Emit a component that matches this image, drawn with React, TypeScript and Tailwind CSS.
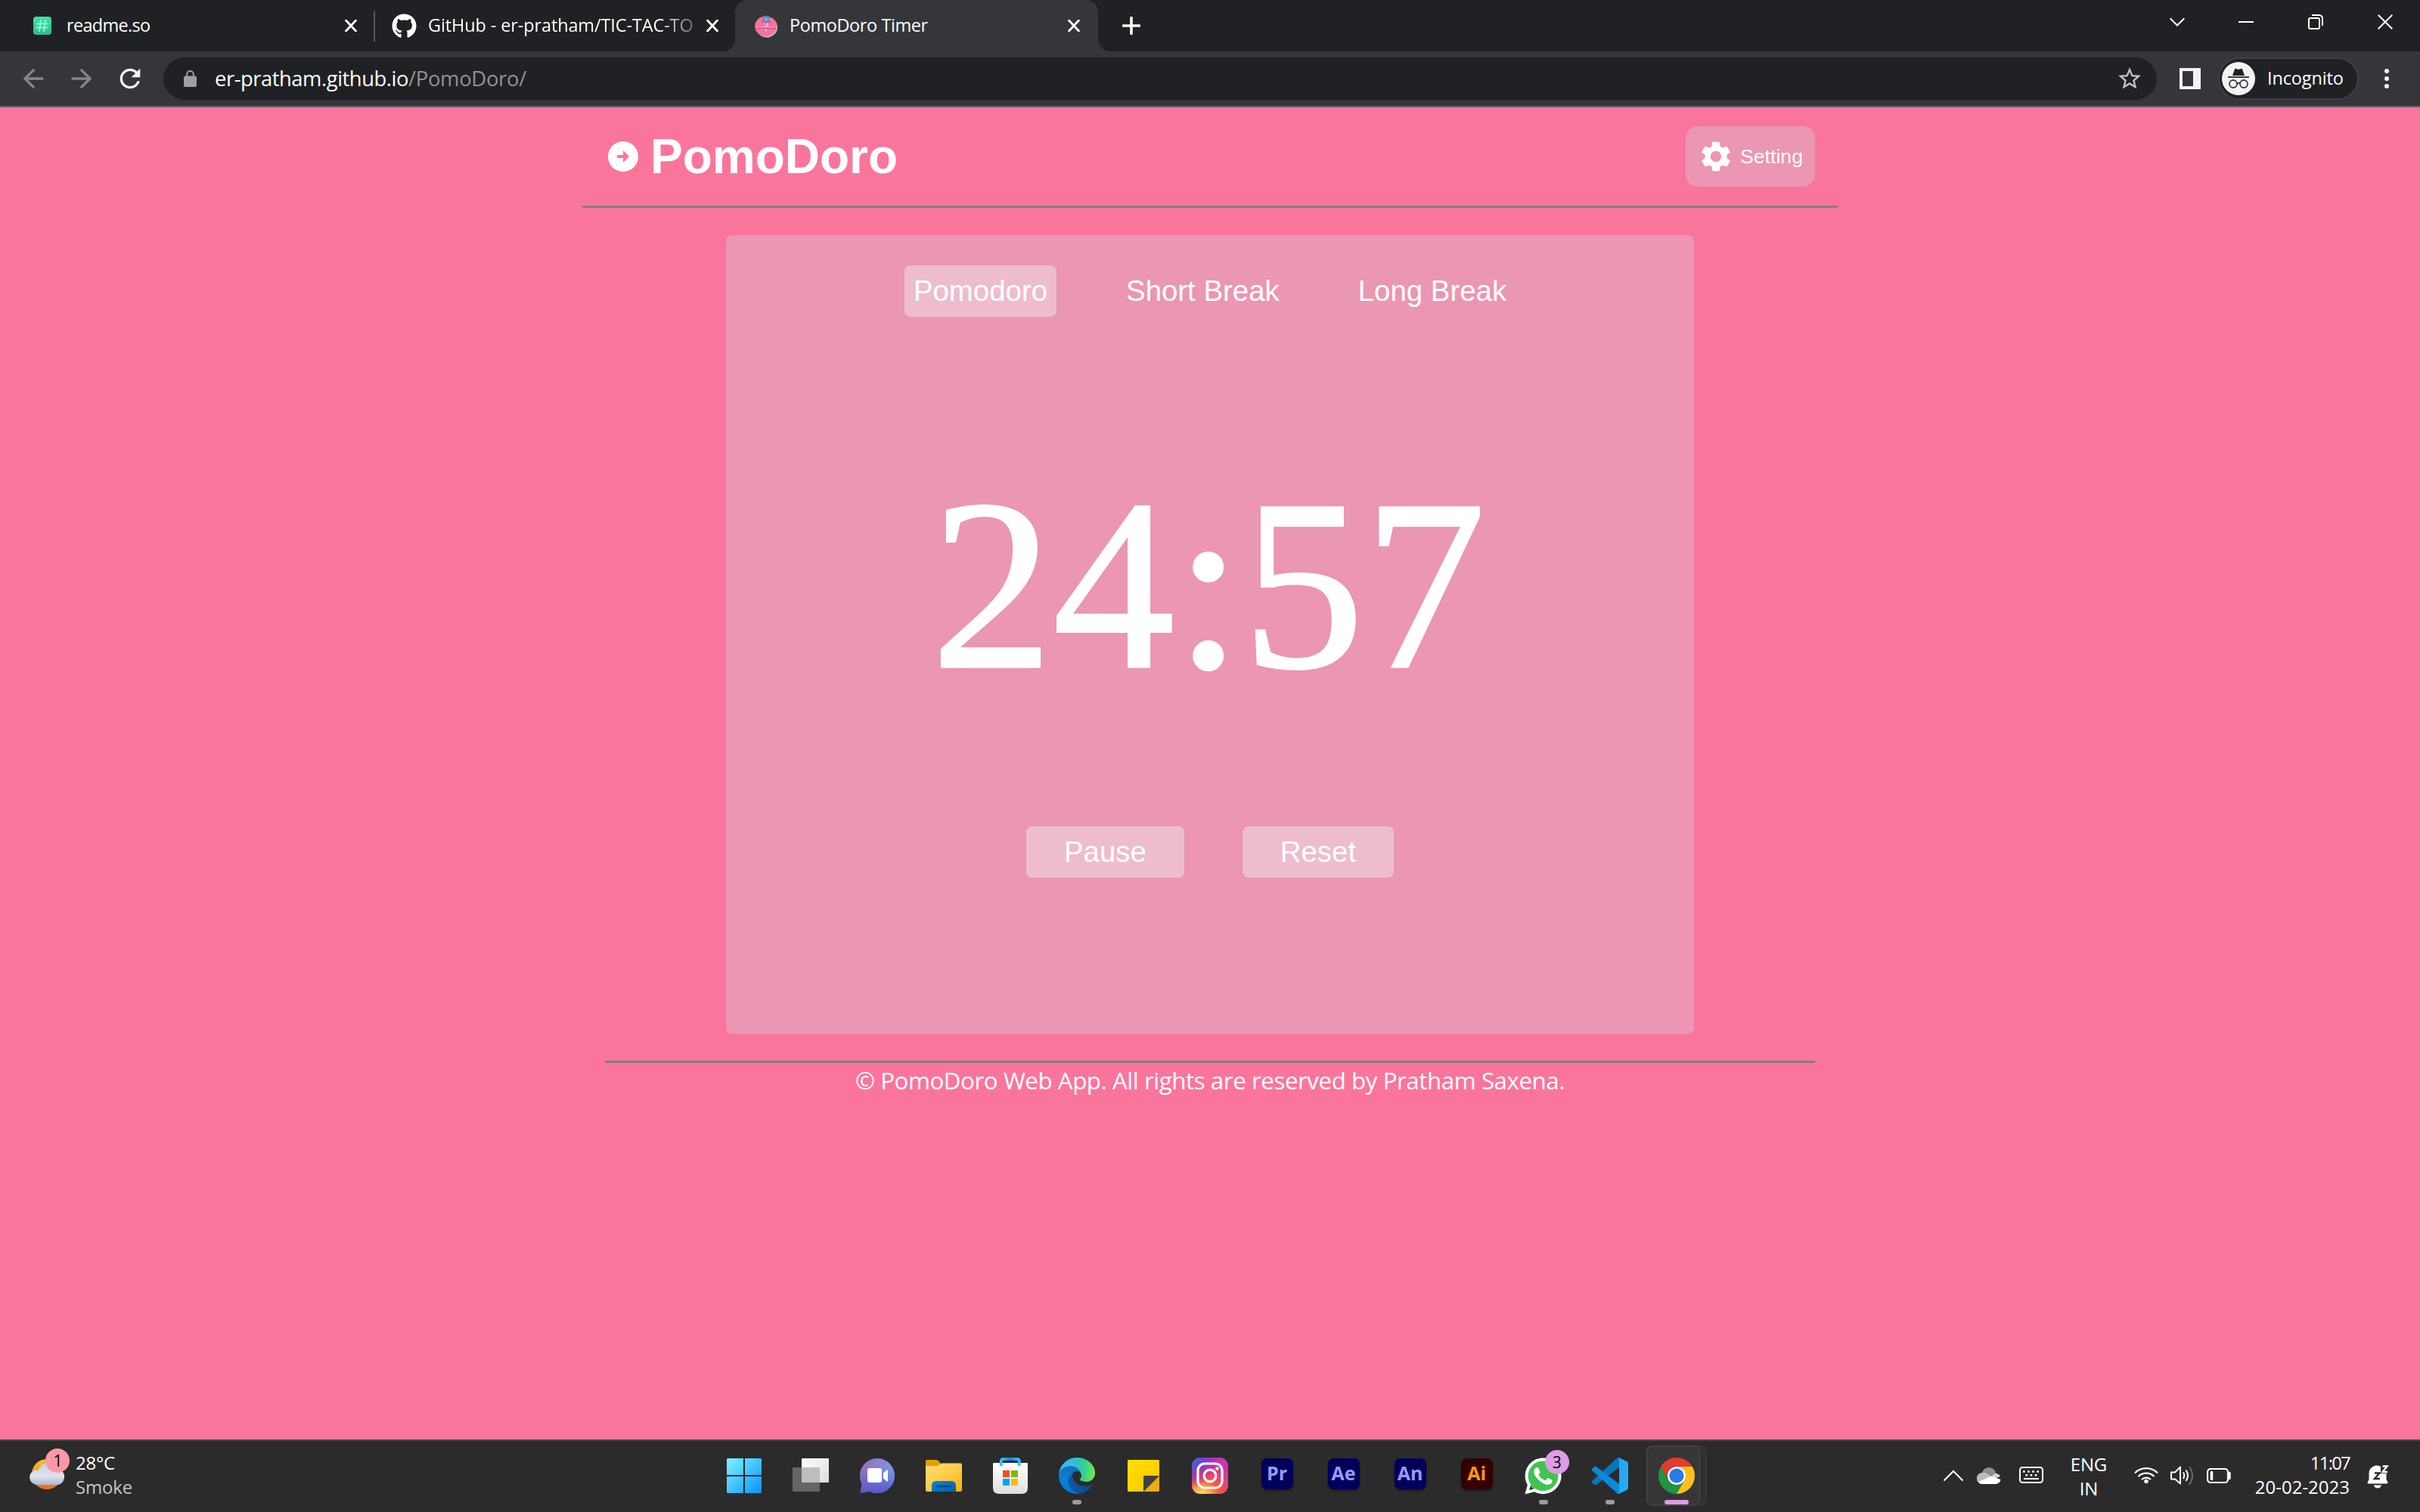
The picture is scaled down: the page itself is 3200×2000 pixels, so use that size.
import React from "react";
import { FaGithub, FaWhatsapp } from "react-icons/fa";
import { MdSettings, MdStarBorder, MdRefresh, MdArrowBack, MdArrowForward } from "react-icons/md";

const CloseX = () => (
  <svg width="16" height="16" viewBox="0 0 16 16" className="shrink-0">
    <path d="M1.500 1 14.500 15M14.500 1 1.500 15" stroke="#fff" strokeWidth="2.800" strokeLinecap="round" fill="none" />
  </svg>
);

function TabStrip() {
  return (
    <div className="flex h-[68px] bg-[#202124]">
      <div className="flex w-[494px] items-center pl-[44px]">
        <svg width="24" height="24" viewBox="0 0 24 24" className="shrink-0">
          <defs>
            <linearGradient id="rd" x1="0" y1="0" x2="0" y2="1">
              <stop offset="0" stopColor="#3fe0a8" />
              <stop offset="1" stopColor="#35b98d" />
            </linearGradient>
          </defs>
          <rect width="24" height="24" rx="4" fill="url(#rd)" />
          <path d="M10 5 8 19M16 5l-2 14M5 9.500h14M4.500 14.500h14" stroke="#86f7cf" strokeWidth="2.200" strokeLinecap="round" />
        </svg>
        <span className="relative -top-px ml-[20px] w-[368px] whitespace-nowrap text-[23.5px] leading-8 tracking-[-0.7px] text-white">readme.so</span>
        <CloseX />
      </div>
      <div className="mt-[15px] h-10 w-[2px] bg-[#5a5c60]" />
      <div className="flex w-[476px] items-center pl-[22px]">
        <FaGithub className="h-[33px] w-[33px] shrink-0 text-white" />
        <span className="relative -top-px ml-[15px] w-[354px] whitespace-nowrap text-[23.5px] leading-8 tracking-[-0.12px] text-white [mask-image:linear-gradient(to_right,#000_86%,#0004_100%)]">GitHub - er-pratham/TIC-TAC-TO</span>
        <span className="ml-[14px] flex"><CloseX /></span>
      </div>
      <div className="relative flex w-[480px] items-center rounded-t-[16px] bg-[#35363a] pl-[26px]">
        <svg width="16" height="16" viewBox="0 0 16 16" className="absolute bottom-0 -left-4"><path d="M16 0V16H0A16 16 0 0 0 16 0Z" fill="#35363a" /></svg>
        <svg width="16" height="16" viewBox="0 0 16 16" className="absolute -right-4 bottom-0"><path d="M0 0V16H16A16 16 0 0 1 0 0Z" fill="#35363a" /></svg>
        <svg width="32" height="32" viewBox="0 0 32 32" className="shrink-0">
          <ellipse cx="16" cy="18" rx="14" ry="13.500" fill="#cfc6d6" />
          <ellipse cx="14.700" cy="16.800" rx="14.500" ry="13.500" fill="#f9719b" />
          <path d="M1 19.500H28" stroke="#b3567f" strokeWidth="1" />
          <path d="M1.500 18H28" stroke="#ffd9e5" strokeWidth="1" strokeDasharray="1 1.200" />
          <path d="M12.500 13.500h1.700v3h-1.700M15.500 13.500h1.700v3h-1.700" stroke="#fff" strokeWidth=".7" fill="none" />
          <circle cx="15" cy="22" r="1" fill="#fff" />
          <path d="M15 1.500 16.200 5.500 21 4.500 17.800 7.500 20.500 11.500 16.500 9.500 15 13 13.500 9.500 9.500 11.500 12.200 7.500 9 4.500 13.800 5.500Z" fill="#5ab4ee" stroke="#2f4d86" strokeWidth=".5" />
        </svg>
        <span className="relative -top-px ml-[14px] w-[368px] whitespace-nowrap text-[23.5px] leading-8 tracking-[-0.42px] text-white">PomoDoro Timer</span>
        <CloseX />
      </div>
      <svg width="24" height="24" viewBox="0 0 24 24" className="mt-[22px] ml-[32px] shrink-0"><path d="M12 1.500V22.500M1.500 12H22.500" stroke="#fff" strokeWidth="3.600" strokeLinecap="round" /></svg>
      <div className="ml-auto flex pr-[36px]">
        <svg width="20" height="12" viewBox="0 0 20 12" className="mt-[23px]"><path d="M.7 1.200 10 10.500 19.300 1.200" stroke="#fff" strokeWidth="2" fill="none" /></svg>
        <svg width="20" height="2" viewBox="0 0 20 2" className="mt-[28px] ml-[71px]"><path d="M0 1H20" stroke="#fff" strokeWidth="2" /></svg>
        <svg width="20" height="20" viewBox="0 0 20 20" className="mt-[19px] ml-[72px]" fill="none" stroke="#fff" strokeWidth="2">
          <rect x="1" y="5" width="14" height="14" rx="2" />
          <path d="M5 1H14.500A4.500 4.500 0 0 1 19 5.500V15" />
        </svg>
        <svg width="20" height="20" viewBox="0 0 20 20" className="mt-[19px] ml-[72px]"><path d="M.7.700 19.300 19.300M19.300.700.700 19.300" stroke="#fff" strokeWidth="2" /></svg>
      </div>
    </div>
  );
}

function Toolbar() {
  return (
    <div className="flex h-[74px] items-center border-b-2 border-[#5f6064] bg-[#35363a] pl-[24px] text-[#e8eaed]">
      <MdArrowBack className="h-10 w-10 text-[#85868a]" />
      <MdArrowForward className="ml-6 h-10 w-10 text-[#85868a]" />
      <MdRefresh className="ml-6 h-10 w-10 text-[#f1f3f4]" />
      <div className="ml-[24px] flex h-14 w-[2636px] items-center rounded-full bg-[#202124] pl-[27px]">
        <svg width="17" height="22" viewBox="0 0 17 22">
          <path d="M4.200 8V5.200A4.300 4.300 0 0 1 12.800 5.200V8" stroke="#9aa0a6" strokeWidth="2" fill="none" />
          <rect y="7.500" width="17" height="14.500" rx="2" fill="#9aa0a6" />
        </svg>
        <span className="ml-[24px] whitespace-nowrap text-[27.4px] leading-9 text-white"><span className="tracking-[-0.47px]">er-pratham.github.io</span><span className="tracking-[-0.3px] text-[#8f9296]">/PomoDoro/</span></span>
        <MdStarBorder className="mr-[18px] ml-auto h-9 w-9 text-[#bdc1c6]" />
      </div>
      <div className="ml-[30px] h-7 w-7 border-4 border-r-10 border-[#f1f3f4]" />
      <div className="ml-[23px] flex h-14 w-[186px] items-center rounded-full border-2 border-[#3f4044] bg-[#202124] pl-[3px]">
        <svg width="44" height="44" viewBox="0 0 44 44" className="shrink-0">
          <circle cx="22" cy="22" r="22" fill="#f1f3f4" />
          <path d="M17 9.500Q17.500 8.300 19 9L22 10 25 9Q26.500 8.300 27 9.500L30 18H14Z" fill="#202124" />
          <path d="M8 20H36" stroke="#3b3c40" strokeWidth="2" />
          <g fill="none" stroke="#3b3c40" strokeWidth="1.800"><circle cx="15" cy="29" r="5" /><circle cx="29" cy="29" r="5" /><path d="M20 28.500Q22 27 24 28.500" /></g>
        </svg>
        <span className="relative -top-px ml-[16px] text-[23.5px] leading-8 tracking-[-0.15px] text-white">Incognito</span>
      </div>
      <svg width="6" height="28" viewBox="0 0 6 28" className="ml-[34px]" fill="#f1f3f4"><circle cx="3" cy="4" r="3" /><circle cx="3" cy="14" r="3" /><circle cx="3" cy="24" r="3" /></svg>
    </div>
  );
}

function PomodoroPage() {
  return (
    <div className="flex h-[1762px] flex-col items-center bg-[#fa759c] font-['Liberation_Sans',Arial,sans-serif] text-white">
      <header className="flex h-[133px] w-[1660px] items-center border-b-3 border-[#808080] px-[30px]">
        <svg width="48" height="48" viewBox="0 0 24 24" fill="#fff">
          <path d="M22 12c0-5.520-4.480-10-10-10S2 6.480 2 12s4.480 10 10 10 10-4.480 10-10zm-10 4v-3H8v-2h4V8l4 4-4 4z" />
        </svg>
        <h1 className="ml-[12px] text-[64px] leading-[72px] font-bold">PomoDoro</h1>
        <button className="ml-auto flex h-20 w-[171px] items-center rounded-2xl bg-[#eb96b2] pl-[16px]">
          <MdSettings className="h-12 w-12" />
          <span className="ml-[8px] text-[26.67px] leading-8">Setting</span>
        </button>
      </header>
      <main className="mt-9 h-[1057px] w-[1280px] rounded-lg bg-[#eb96b2] pt-10 text-[38.4px] leading-[44px]">
        <nav className="flex justify-center gap-20">
          <button className="rounded-lg bg-[#edbdce] p-3">Pomodoro</button>
          <button className="p-3">Short Break</button>
          <button className="p-3">Long Break</button>
        </nav>
        <div className="flex h-[674px] items-center justify-center pt-[36px] pr-[4px] font-['Liberation_Serif','Times_New_Roman',serif] text-[322px] leading-none [-webkit-text-stroke:3px_white]">24:57</div>
        <div className="flex justify-center gap-[77px]">
          <button className="rounded-lg bg-[#edbdce] px-[50px] py-3">Pause</button>
          <button className="rounded-lg bg-[#edbdce] px-[50px] py-3">Reset</button>
        </div>
      </main>
      <footer className="mt-[35px] w-[1600px] border-t-3 border-[#808080] text-center font-['Open_Sans','Noto_Sans',sans-serif] text-[31.3px] leading-[46px] tracking-[-0.45px]">© PomoDoro Web App. All rights are reserved by Pratham Saxena.</footer>
    </div>
  );
}

const Adobe = ({ t, bg, fg }: { t: string; bg: string; fg: string }) => (
  <span className={`mb-[5px] flex h-[41px] w-[42px] items-center justify-center rounded-[8px] pb-[3px] text-[25px] leading-none font-bold shadow-[0_2px_3px_#0006] ${bg} ${fg}`}>{t}</span>
);

const icons: { icon: React.ReactNode; dot?: boolean }[] = [
  { icon: (
    <svg width="46" height="46" viewBox="0 0 46 46">
      <defs><linearGradient id="win" x1="0" y1="0" x2="46" y2="46" gradientUnits="userSpaceOnUse"><stop offset="0" stopColor="#7df4ff" /><stop offset="1" stopColor="#0794ff" /></linearGradient></defs>
      <path d="M1 0H22V22H0V1ZM24 0H45L46 1V22H24ZM0 24H22V46H1L0 45ZM24 24H46V45L45 46H24Z" fill="url(#win)" />
    </svg>) },
  { icon: (
    <svg width="48" height="46" viewBox="0 0 48 46">
      <defs><linearGradient id="tv" x1="0" y1="0" x2="1" y2="1"><stop offset="0" stopColor="#fff" /><stop offset="1" stopColor="#dcdcdc" /></linearGradient></defs>
      <rect x="12" y="0" width="36" height="32" rx="1" fill="url(#tv)" />
      <rect x="0" y="12" width="36" height="32" rx="1" fill="#7a7a7a" fillOpacity=".75" />
      <path d="M12 12H36V32H12Z" fill="#bdbdbd" />
    </svg>) },
  { icon: (
    <svg width="46" height="46" viewBox="0 0 46 46">
      <defs><linearGradient id="ch" x1="0" y1="0" x2="1" y2=".35"><stop offset="0" stopColor="#9a68ad" /><stop offset="1" stopColor="#7a9bee" /></linearGradient>
        <linearGradient id="ch2" x1="0" y1="0" x2="0" y2="1"><stop offset=".3" stopColor="#5558c8" stopOpacity="0" /><stop offset="1" stopColor="#5558cc" /></linearGradient></defs>
      <path d="M23 0A23 23 0 1 1 13 43.700L2 45.500Q.5 45.500.800 44L2.500 33.500A23 23 0 0 1 23 0Z" fill="url(#ch)" />
      <path d="M23 0A23 23 0 1 1 13 43.700L2 45.500Q.5 45.500.800 44L2.500 33.500A23 23 0 0 1 23 0Z" fill="url(#ch2)" />
      <rect x="10" y="13" width="19" height="19" rx="3" fill="#fff" /><path d="M31 19.500 35.500 15.500Q37 15 37 16.500V29.500Q37 31 35.500 30.300L31 26.500Z" fill="#fff" />
    </svg>) },
  { icon: (
    <svg width="48" height="42" viewBox="0 0 48 42">
      <defs><linearGradient id="fo" x1="0" y1="0" x2="1" y2="1"><stop offset="0" stopColor="#ffdc78" /><stop offset=".6" stopColor="#ffca3e" /><stop offset="1" stopColor="#f5ae05" /></linearGradient>
        <linearGradient id="fb" x1="0" y1="0" x2="1" y2="1"><stop offset="0" stopColor="#0f83d9" /><stop offset="1" stopColor="#0a5cab" /></linearGradient></defs>
      <path d="M0 2Q0 0 2 0H14Q16 0 17.500 2L20 5V12H0Z" fill="#e0a000" />
      <path d="M0 8 L14 8Q16 8 18 6.500L20 5Q21 4.500 22 4.500H46Q48 4.500 48 6.500V40Q48 42 46 42H2Q0 42 0 40Z" fill="url(#fo)" />
      <path d="M8 42V34Q8 28 14 28H34Q40 28 40 34V42Z" fill="url(#fb)" /><path d="M15 35H33" stroke="#064889" strokeWidth="2.400" strokeLinecap="round" />
    </svg>) },
  { icon: (
    <svg width="46" height="48" viewBox="0 0 46 48">
      <defs><linearGradient id="st" x1="0" y1="0" x2="0" y2="1"><stop offset="0" stopColor="#fff" /><stop offset="1" stopColor="#dedede" /></linearGradient>
        <linearGradient id="sh" x1="0" y1="0" x2="1" y2="0"><stop offset="0" stopColor="#32c5f4" /><stop offset=".5" stopColor="#1384dc" /><stop offset="1" stopColor="#32c5f4" /></linearGradient></defs>
      <path d="M0 8Q0 7 1 7H45Q46 7 46 8V40Q46 48 38 48H8Q0 48 0 40Z" fill="url(#st)" />
      <path d="M10.800 11V5Q10.800 2 14 2H31.500Q34.800 2 34.800 5V11" fill="none" stroke="url(#sh)" strokeWidth="3.800" />
      <path d="M13 17H22V26H13Z" fill="#f25022" /><path d="M24 17H33V26H24Z" fill="#7fba00" /><path d="M13 28H22V37H13Z" fill="#00a4ef" /><path d="M24 28H33V37H24Z" fill="#ffb900" />
    </svg>) },
  { dot: true, icon: (
    <svg width="48" height="48" viewBox="0 0 256 256">
      <defs>
        <linearGradient id="e1" x1="60" y1="178" x2="237" y2="178" gradientUnits="userSpaceOnUse"><stop offset="0" stopColor="#0c59a4" /><stop offset="1" stopColor="#114a8b" /></linearGradient>
        <linearGradient id="e2" x1="150" y1="80" x2="45" y2="230" gradientUnits="userSpaceOnUse"><stop offset="0" stopColor="#1b70b8" /><stop offset=".3" stopColor="#0f74c4" /><stop offset=".7" stopColor="#0680d7" /><stop offset="1" stopColor="#0078d4" /></linearGradient>
        <linearGradient id="e3" x1="10" y1="80" x2="250" y2="110" gradientUnits="userSpaceOnUse"><stop offset="0" stopColor="#35c1f1" /><stop offset=".4" stopColor="#30bfd8" /><stop offset=".7" stopColor="#36d08f" /><stop offset="1" stopColor="#6ee94e" /></linearGradient>
      </defs>
      <path fill="url(#e1)" d="M231 190.500c-3.400 1.800-6.900 3.400-10.500 4.700a101.500 101.500 0 0 1-35.800 6.400c-47.200 0-88.300-32.500-88.300-74.100.1-11.400 6.400-21.900 16.400-27.300-42.700 1.800-53.700 46.300-53.700 72.400 0 73.800 68.100 81.300 82.700 81.300 7.900 0 19.800-2.300 26.900-4.600l1.300-.4a128.300 128.300 0 0 0 66.600-52.800 4 4 0 0 0-5.600-5.600z" />
      <path fill="url(#e2)" d="M105.700 241.400a79.200 79.200 0 0 1-22.700-21.300A80.700 80.700 0 0 1 112.500 100.200c3.200-1.500 8.500-4.100 15.600-4a32.400 32.400 0 0 1 25.700 13 31.900 31.900 0 0 1 6.300 18.700c0-.2 24.500-79.600-80-79.600-43.900 0-80 41.700-80 78.200-.2 19.300 4 38.500 12.100 56a128 128 0 0 0 156.400 67.100 75.500 75.500 0 0 1-62.800-8.100z" />
      <path fill="url(#e3)" d="M152.300 148.900c-.8 1-3.300 2.500-3.300 5.700 0 2.600 1.700 5.200 4.800 7.300 14.400 10.100 41.700 8.700 41.800 8.700a59.600 59.600 0 0 0 30.300-8.300 61.400 61.400 0 0 0 30.400-52.900c.3-22.400-8-37.300-11.300-43.900C223.800 23.900 177.700 0 127.700 0A128 128 0 0 0 0 126.200c.5-36.500 36.800-66 80-66 3.500 0 23.500.3 42 10.100 16.300 8.600 24.900 18.900 30.800 29.200 6.200 10.700 7.300 24.100 7.300 29.500 0 5.300-2.700 13.300-7.800 19.900z" />
    </svg>) },
  { icon: (
    <svg width="42" height="42" viewBox="0 0 42 42">
      <defs><linearGradient id="sn" x1="0" y1="0" x2="1" y2="1"><stop offset="0" stopColor="#ffe000" /><stop offset="1" stopColor="#ffc600" /></linearGradient></defs>
      <path d="M1 0H41L42 1V21L21 42H1L0 41V1Z" fill="url(#sn)" /><path d="M42 21V41L41 42H21Z" fill="#f0ac10" /><path d="M21 42V22L22 21H42Z" fill="#404040" />
    </svg>) },
  { icon: (
    <svg width="48" height="48" viewBox="0 0 48 48">
      <defs>
        <radialGradient id="i1" cx=".27" cy="1.080" r="1"><stop offset="0" stopColor="#fd5" /><stop offset=".1" stopColor="#fd5" /><stop offset=".5" stopColor="#ff543e" /><stop offset="1" stopColor="#c837ab" /></radialGradient>
        <radialGradient id="i2" cx="-.17" cy="-.07" r=".95"><stop offset="0" stopColor="#3771c8" /><stop offset=".3" stopColor="#4168d0" /><stop offset="1" stopColor="#60f" stopOpacity="0" /></radialGradient>
      </defs>
      <rect width="48" height="48" rx="11" fill="url(#i1)" /><rect width="48" height="48" rx="11" fill="url(#i2)" />
      <g fill="none" stroke="#fff" strokeWidth="3.200"><rect x="8" y="8" width="32" height="32" rx="9" /><circle cx="24" cy="24" r="7.800" /></g><circle cx="33.500" cy="14.500" r="2.200" fill="#fff" />
    </svg>) },
  { icon: <Adobe t="Pr" bg="bg-[#00005b]" fg="text-[#9999ff]" /> },
  { icon: <Adobe t="Ae" bg="bg-[#00005b]" fg="text-[#9999ff]" /> },
  { icon: <Adobe t="An" bg="bg-[#00005b]" fg="text-[#9999ff]" /> },
  { icon: <Adobe t="Ai" bg="bg-[#330000]" fg="text-[#ff9a00]" /> },
  { dot: true, icon: (
    <span className="relative flex h-12 w-12 items-center justify-center">
      <span className="absolute h-[43px] w-[43px] rounded-full bg-[#41c351]" />
      <FaWhatsapp className="relative h-[55px] w-[55px] shrink-0 text-white" />
      <span className="absolute -top-[10px] left-[26px] flex h-8 w-8 items-center justify-center rounded-full bg-[#dc9de4] text-[21px] leading-none text-black">3</span>
    </span>) },
  { dot: true, icon: (
    <svg width="48" height="48" viewBox="0 0 100 100">
      <path fill="#0a74bc" d="M96.460 10.800 75.860.880a6.230 6.230 0 0 0-7.110 1.200L1.300 63.580a4.170 4.170 0 0 0 0 6.160l5.510 5.010a4.170 4.170 0 0 0 5.320.240l81.230-61.620c2.720-2.070 6.640-.130 6.640 3.290v-.240a6.250 6.250 0 0 0-3.540-5.620z" />
      <path fill="#0a8ad8" d="M96.460 89.200 75.860 99.120a6.230 6.230 0 0 1-7.110-1.200L1.300 36.420a4.170 4.170 0 0 1 0-6.160l5.510-5.010a4.170 4.170 0 0 1 5.320-.240l81.230 61.620c2.720 2.070 6.640.130 6.640-3.290v.240a6.250 6.250 0 0 1-3.540 5.620z" />
      <path fill="#27a8f5" d="M75.860 99.130a6.230 6.230 0 0 1-7.110-1.210c2.310 2.310 6.250.670 6.250-2.590V4.670c0-3.260-3.940-4.900-6.250-2.590a6.230 6.230 0 0 1 7.110-1.210l20.600 9.910A6.250 6.250 0 0 1 100 16.410v67.180a6.250 6.250 0 0 1-3.540 5.630z" />
    </svg>) },
];

const ChromeLogo = () => (
  <svg width="48" height="48" viewBox="0 0 48 48">
    <path fill="#e33b2e" d="M24 12H44.780A24 24 0 0 0 3.220 12L13.600 30A12 12 0 0 1 24 12Z" />
    <path fill="#229342" d="M3.220 12 13.600 30A12 12 0 0 0 34.400 30L24 48A24 24 0 0 1 3.220 12Z" />
    <path fill="#fcc21b" d="M44.780 12H24A12 12 0 0 1 34.400 30L24 48A24 24 0 0 0 44.780 12Z" />
    <circle cx="24" cy="24" r="12" fill="#fff" /><circle cx="24" cy="24" r="9.600" fill="#2a78ea" />
  </svg>
);

function Taskbar() {
  return (
    <div className="flex h-24 border-t-2 border-[#4a4a4a] bg-[#2b2b2b] text-[24px] text-white">
      <div className="flex w-[940px] pl-[36px]">
        <svg width="60" height="60" viewBox="0 0 60 60" className="mt-[8px]">
          <defs>
            <linearGradient id="sun" x1="0" y1="0" x2="0" y2="1"><stop offset="0" stopColor="#f8c22f" /><stop offset="1" stopColor="#f06a0c" /></linearGradient>
            <linearGradient id="cl" x1="0" y1="0" x2="0" y2="1"><stop offset="0" stopColor="#c3cfe0" /><stop offset=".6" stopColor="#dfe4ea" /><stop offset="1" stopColor="#a9b9d6" /></linearGradient>
          </defs>
          <circle cx="26" cy="36" r="20" fill="url(#sun)" />
          <path d="M12 50A10 10 0 0 1 9 31Q13 30 14.500 31A14 14 0 0 1 40 28.500 11 11 0 0 1 41 50Z" fill="url(#cl)" />
          <circle cx="40" cy="18" r="16" fill="#ff99a4" />
          <text x="40.500" y="25.500" textAnchor="middle" fontSize="21" fill="#000">1</text>
        </svg>
        <div className="mt-[13px] ml-[4px] leading-[32px] tracking-[-0.2px]"><div>28°C</div><div className="text-[#c6c6c6]">Smoke</div></div>
      </div>
      <div className="flex">
        {icons.map((it, i) => (
          <div key={i} className="flex w-[88.070px] flex-col items-center">
            <div className="mt-[22px] flex h-12 items-center">{it.icon}</div>
            {it.dot && <span className="mt-2 h-[6px] w-3 rounded-full bg-[#9d9d9d]" />}
          </div>
        ))}
        <div className="relative mt-[6px] ml-[4px] h-20 w-[80px]">
          <span className="absolute right-0 h-20 w-5 rounded-[8px] border-2 border-[#383838] bg-[#303030]" />
          <div className="relative flex h-20 w-[71px] flex-col items-center rounded-[8px] border-2 border-[#424242] bg-[#363636]">
            <span className="mt-[14px] ml-[9px]"><ChromeLogo /></span>
            <span className="mt-2 ml-[9px] h-[6px] w-8 shrink-0 rounded-full bg-[#dc9de4]" />
          </div>
        </div>
      </div>
      <div className="ml-auto flex pr-[40px]">
        <svg width="28" height="16" viewBox="0 0 28 16" className="mt-[38px]"><path d="M1.500 14.500 14 2 26.500 14.500" fill="none" stroke="#fff" strokeWidth="2" /></svg>
        <svg width="32" height="22" viewBox="0 0 32 22" className="mt-[35px] ml-[17px]">
          <path d="M7 7A9.500 9.500 0 0 1 25.500 8L20 12Z" fill="#8e8e8e" />
          <path d="M7 22A7.500 7.500 0 0 1 7.500 7Q11 6 14 8.500L21 13 7 22Z" fill="#bcbcbc" />
          <path d="M20 11.500Q22 8 26 8A7 7 0 0 1 31 12L24 14.500Z" fill="#d8d8d8" />
          <path d="M2.500 19 19 11.500 31.500 16A6.500 6.500 0 0 1 25.500 22H7Q4 22 2.500 19Z" fill="#fff" />
        </svg>
        <svg width="32" height="24" viewBox="0 0 32 24" className="mt-[33px] ml-[24px]" fill="none" stroke="#fff" strokeWidth="2">
          <rect x="1" y="2" width="30" height="20" rx="3.500" /><path d="M6 17H26" /><path d="M5 7.500H27" strokeDasharray="2.600 3.500" strokeWidth="2.600" /><path d="M8.500 12.300H24" strokeDasharray="2.600 3.500" strokeWidth="2.600" />
        </svg>
        <div className="mt-[15px] ml-[35px] w-[50px] text-center leading-[32px] tracking-[-0.2px]"><div>ENG</div><div>IN</div></div>
        <svg width="32" height="24" viewBox="0 0 32 24" className="mt-[33px] ml-[35px]" fill="none" stroke="#fff" strokeWidth="2.200">
          <path d="M1 9.500A21 21 0 0 1 31 9.500" /><path d="M5.500 14A15 15 0 0 1 26.500 14" /><path d="M10 18A9 9 0 0 1 22 18" /><circle cx="16" cy="20.500" r="2.700" fill="#fff" stroke="none" />
        </svg>
        <svg width="32" height="28" viewBox="0 0 32 28" className="mt-[32px] ml-[16px]" fill="none" stroke="#fff" strokeWidth="2">
          <path d="M1 9.500H6L13 2.500V24.500L6 18.500H1Z" strokeLinejoin="round" /><path d="M17 9.500Q19.500 13.500 17 18" /><path d="M20.500 6.500Q25.500 13.500 20.500 21" /><path d="M25 2Q33 13.500 25 26" stroke="#6a6a6a" />
        </svg>
        <svg width="33" height="20" viewBox="0 0 33 20" className="mt-[36px] ml-[16px]" fill="none" stroke="#fff" strokeWidth="2.200">
          <rect x="1" y="1" width="27" height="18" rx="4" /><path d="M30 6.500V13.500" strokeWidth="3.400" strokeLinecap="round" /><path d="M6.500 5.500V14.500" strokeWidth="3.600" strokeLinecap="round" />
        </svg>
        <div className="mt-[13px] ml-[30px] w-[126px] text-right leading-[32px] whitespace-nowrap"><div className="tracking-[-1.8px]">11:07</div><div>20-02-2023</div></div>
        <svg width="30" height="32" viewBox="0 0 30 32" className="mt-[31px] ml-[23px]">
          <path d="M2.500 20V12A10.500 10.500 0 0 1 19 3.500V12H25.500V20L27.500 24Q27.500 25.500 26 25.500H2Q.5 25.500.500 24Z" fill="#fff" />
          <path d="M9 27.500H19Q18 31.500 14 31.500T9 27.500Z" fill="#fff" />
          <path d="M18 1H29V12H18Z" fill="#2b2b2b" /><path d="M20.500 2.500H26.500L20.500 10H27" stroke="#fff" strokeWidth="2.400" fill="none" />
          <path d="M10 11.500H16.500L10 19H17" stroke="#2b2b2b" strokeWidth="2.400" fill="none" />
        </svg>
      </div>
    </div>
  );
}

export default function App() {
  return (
    <div className="w-[3200px] overflow-hidden font-['Open_Sans','Noto_Sans',sans-serif]">
      <TabStrip />
      <Toolbar />
      <PomodoroPage />
      <Taskbar />
    </div>
  );
}
